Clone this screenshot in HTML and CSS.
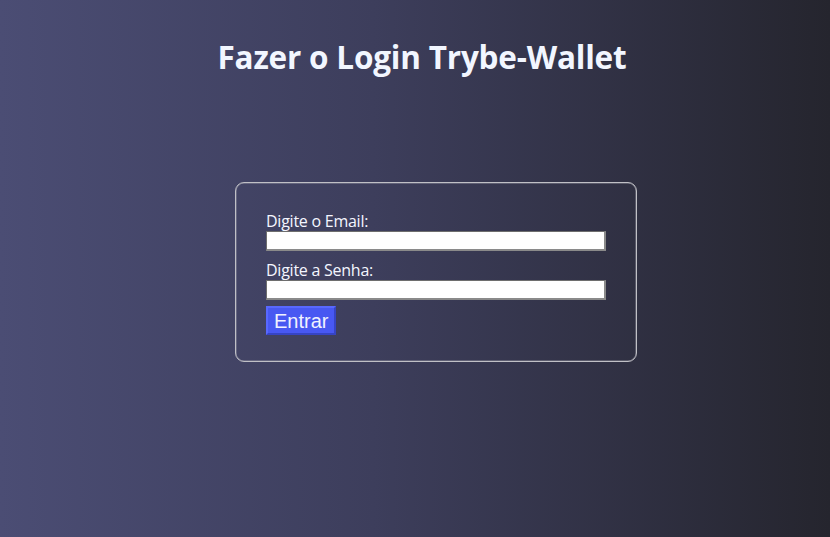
FILE: index.html
```html
<!DOCTYPE html>
<html lang="pt-BR">
<head>
<meta charset="utf-8">
<title>Trybe-Wallet</title>
<link rel="stylesheet" href="styles.css">
</head>
<body>
<main class="page">
  <h1 class="title">Fazer o Login Trybe-Wallet</h1>
  <form class="card">
    <label class="label" for="email">Digite o Email:</label>
    <input class="field" id="email" type="email">
    <label class="label label-second" for="senha">Digite a Senha:</label>
    <input class="field" id="senha" type="password">
    <button class="btn" type="button">Entrar</button>
  </form>
</main>
</body>
</html>
```
FILE: styles.css
```css
html, body {
  margin: 0;
  padding: 0;
}
body {
  min-height: 100vh;
  background: linear-gradient(to right, #4b4d74 0%, #3d3e5c 45%, #25252e 100%);
  font-family: "Open Sans", "Noto Sans", sans-serif;
  color: #f4f6ff;
}
.page {
  display: flex;
  flex-direction: column;
  padding-top: 37px;
}
.title {
  margin: 0;
  padding-left: 14px;
  text-align: center;
  font-size: 31.5px;
  line-height: 40px;
  font-weight: 700;
  letter-spacing: -0.2px;
  color: #f2f6ff;
}
.card {
  box-sizing: border-box;
  width: 402px;
  margin: 105px 0 0 235px;
  border: 1px solid #c0c0c6;
  border-radius: 9px;
  box-shadow: inset 0 0 0 0.5px rgba(190, 190, 198, 0.6);
  padding: 28px 30px 26px;
  display: flex;
  flex-direction: column;
  align-items: flex-start;
}
.label {
  display: block;
  font-size: 16px;
  line-height: 20px;
  letter-spacing: -0.25px;
  color: #f4f6ff;
}
.label-second {
  margin-top: 9px;
}
.field {
  box-sizing: border-box;
  width: 340px;
  height: 20px;
  margin: 0;
  padding: 0 2px;
  background: #ffffff;
  border-width: 1px 2px 2px 1px;
  border-color: #6e6e6e #8a8a8a #8a8a8a #6e6e6e;
  border-style: solid;
}
.btn {
  box-sizing: border-box;
  margin-top: 6px;
  height: 29px;
  padding: 0 6px;
  font-family: "Liberation Sans", Arial, sans-serif;
  font-size: 20px;
  line-height: 24px;
  color: #f0f2ff;
  background: #4858f2;
  border: 2px solid;
  border-color: #5868ff #3644c4 #3644c4 #5868ff;
  cursor: pointer;
}
```
